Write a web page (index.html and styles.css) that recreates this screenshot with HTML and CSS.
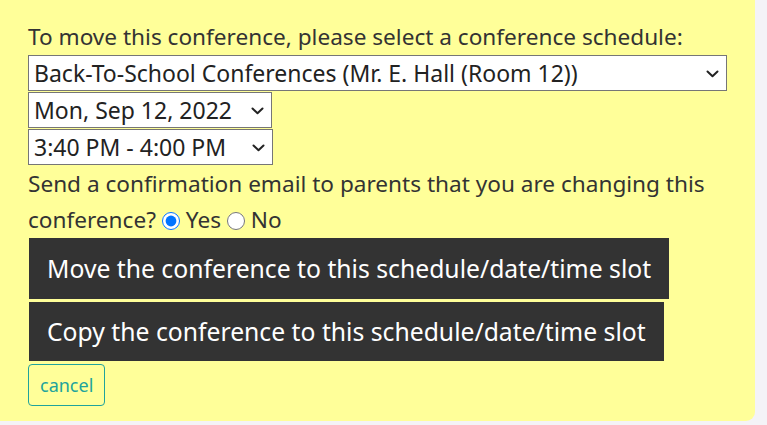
FILE: index.html
```html
<!DOCTYPE html>
<html lang="en">
<head>
<meta charset="utf-8">
<title>Move conference</title>
<link rel="stylesheet" href="styles.css">
</head>
<body>
<div class="panel">
  <p class="prompt">To move this conference, please select a conference schedule:</p>
  <div class="selects">
    <div class="sel sel-wide">
      <select><option>Back-To-School Conferences (Mr. E. Hall (Room 12))</option></select>
      <svg class="chev" viewBox="0 0 13 8" width="13" height="8"><path d="M1.5 1.5 L6.5 6.2 L11.5 1.5" fill="none" stroke="#222" stroke-width="2" stroke-linecap="round" stroke-linejoin="round"/></svg>
    </div>
    <div class="sel sel-date">
      <select><option>Mon, Sep 12, 2022</option></select>
      <svg class="chev" viewBox="0 0 13 8" width="13" height="8"><path d="M1.5 1.5 L6.5 6.2 L11.5 1.5" fill="none" stroke="#222" stroke-width="2" stroke-linecap="round" stroke-linejoin="round"/></svg>
    </div>
    <div class="sel sel-time">
      <select><option>3:40 PM - 4:00 PM</option></select>
      <svg class="chev" viewBox="0 0 13 8" width="13" height="8"><path d="M1.5 1.5 L6.5 6.2 L11.5 1.5" fill="none" stroke="#222" stroke-width="2" stroke-linecap="round" stroke-linejoin="round"/></svg>
    </div>
  </div>
  <p class="confirm">Send a confirmation email to parents that you are changing this conference?
    <label class="radio"><input type="radio" name="email" checked> Yes</label>
    <label class="radio"><input type="radio" name="email"> No</label>
  </p>
  <div class="actions">
    <button class="btn-dark btn-move">Move the conference to this schedule/date/time slot</button>
    <button class="btn-dark btn-copy">Copy the conference to this schedule/date/time slot</button>
    <button class="btn-cancel">cancel</button>
  </div>
</div>
</body>
</html>
```

FILE: styles.css
```css
html, body {
  margin: 0;
  padding: 0;
  background: #f4f3f7;
}
body {
  font-family: "Noto Sans", "Open Sans", sans-serif;
  color: #333;
  height: 425px;
  overflow: hidden;
}
.panel {
  width: 699px;
  height: 402px;
  padding: 19px 28px 0 28px;
  background: #ffff99;
  border-bottom-right-radius: 9px;
}
.prompt {
  margin: 0;
  font-size: 22.6px;
  line-height: 36px;
  white-space: nowrap;
}
.selects {
  display: flex;
  flex-direction: column;
  align-items: flex-start;
  gap: 1px;
}
.sel {
  position: relative;
  height: 36px;
}
.sel select {
  appearance: none;
  -webkit-appearance: none;
  height: 36px;
  margin: 0;
  padding: 0 0 0 5px;
  border: 1px solid #767676;
  border-radius: 0;
  background: #fff;
  color: #222;
  font-family: inherit;
  font-size: 23px;
}
.sel-wide select { width: 699px; }
.sel-date select { width: 244px; }
.sel-time select { width: 245px; }
.chev {
  position: absolute;
  right: 8px;
  top: 15px;
  pointer-events: none;
}
.confirm {
  margin: 1px 0 0 0;
  font-size: 22.6px;
  line-height: 36px;
}
.radio input {
  margin: 0;
  width: 18px;
  height: 18px;
  vertical-align: -2px;
  accent-color: #0075ff;
}
.actions {
  display: flex;
  flex-direction: column;
  align-items: flex-start;
}
.btn-dark {
  margin: 0 0 3px 1px;
  padding: 0 18px;
  border: none;
  background: #333;
  color: #fff;
  font-family: inherit;
  font-size: 24.72px;
  white-space: nowrap;
}
.btn-move { height: 61px; }
.btn-copy { height: 59px; }
.btn-cancel {
  height: 42px;
  padding: 0 11px;
  border: 1px solid #20a39c;
  border-radius: 4px;
  background: transparent;
  color: #20a39c;
  font-family: inherit;
  font-size: 18px;
}
```
